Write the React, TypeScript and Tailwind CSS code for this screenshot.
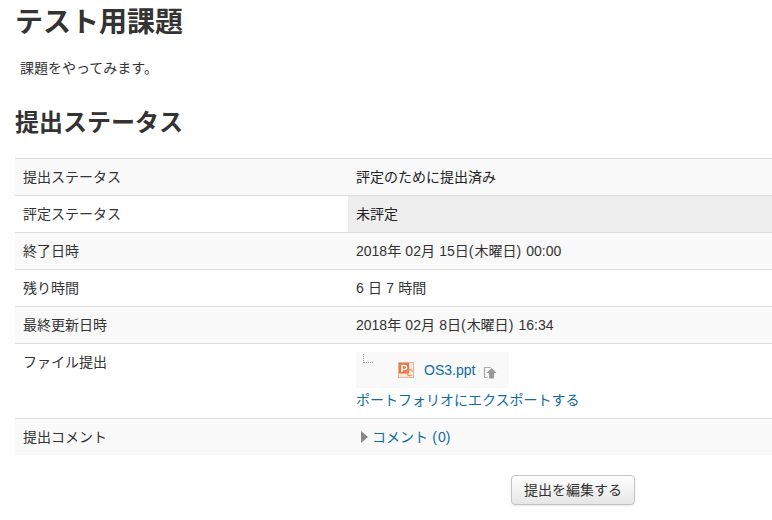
const font = { fontFamily: '"Liberation Sans", "Noto Sans CJK JP", sans-serif', wordSpacing: "0.33px" };

function Row({ label, bg, children, valueBg = "", h = "h-[37px]" }: { label: string; bg: string; children: React.ReactNode; valueBg?: string; h?: string }) {
  return (
    <div className={`flex ${h} border-t border-[#dddddd] ${bg}`}>
      <div className="w-[333px] shrink-0 pl-2 pt-[8px] leading-5">{label}</div>
      <div className={`flex-1 pl-2 pt-[8px] leading-5 ${valueBg}`}>{children}</div>
    </div>
  );
}

function Paren({ c }: { c: string }) {
  return <span className="tracking-[1px]">{c}</span>;
}

function PptIcon() {
  return (
    <svg width="16" height="16" viewBox="0 0 16 16" className="shrink-0">
      <rect x="0.5" y="0.5" width="15" height="15" fill="#fbe9dd" stroke="#eeb595" />
      <rect x="1" y="1" width="10" height="10.5" fill="#e8743f" />
      <path d="M4 10V3.5h2.6a2 2 0 0 1 0 4H4" fill="none" stroke="#fff" strokeWidth="1.4" />
      <path d="M14.5 9.5a3 3 0 1 0-1 3.5" fill="none" stroke="#e8905f" strokeWidth="1.2" />
    </svg>
  );
}

function PortfolioIcon() {
  return (
    <svg width="14" height="14" viewBox="0 0 14 14" className="shrink-0">
      <path d="M1.5 12.5V2.5h6M1.5 12.5h3" fill="none" stroke="#aaa" strokeWidth="1.2" />
      <path d="M8.5 3 13.5 8H11V13.5H6V8H3.5Z" fill="#999" />
    </svg>
  );
}

export default function App() {
  return (
    <div className="w-[772px] h-[520px] overflow-hidden bg-white text-[14px] text-[#333333]" style={font}>
      <div className="pl-[15px]">
        <h2 className="h-[40px] text-[28px] font-bold leading-[46px] text-[#333333]">テスト用課題</h2>
        <p className="pl-[5px] pt-[18px] leading-5">課題をやってみます。</p>
        <h3 className="mt-[25px] h-[40px] text-[24px] font-bold leading-[40px]">提出ステータス</h3>
        <div className="mt-[15px]">
          <Row label="提出ステータス" bg="bg-[#f9f9f9]"><span className="text-[#222]">評定のために提出済み</span></Row>
          <Row label="評定ステータス" bg="bg-white" valueBg="bg-[#eeeeee]"><span className="text-[#222]">未評定</span></Row>
          <Row label="終了日時" bg="bg-[#f9f9f9]">2018年 02月 15日<Paren c="(" />木曜日<Paren c=")" /> 00:00</Row>
          <Row label="残り時間" bg="bg-white">6 日 7 時間</Row>
          <Row label="最終更新日時" bg="bg-[#f9f9f9]">2018年 02月 8日<Paren c="(" />木曜日<Paren c=")" /> 16:34</Row>
          <Row label="ファイル提出" bg="bg-white" h="h-[75px]">
            <div className="flex h-[36px] w-[153px] items-center bg-[#f9f9f9] pl-[42px] relative">
              <span className="absolute left-[7px] top-[2px] h-[9px] w-[10px] border-b border-l border-dotted border-[#999]" />
              <PptIcon />
              <a className="ml-[10px] text-[#0f6c9f]">OS3.ppt</a>
              <span className="ml-[8px] mt-[3px]"><PortfolioIcon /></span>
            </div>
            <a className="block pt-[1px] leading-[22px] text-[#0f6c9f]">ポートフォリオにエクスポートする</a>
          </Row>
          <Row label="提出コメント" bg="bg-[#f9f9f9]">
            <div className="flex items-center pl-[5px]">
              <span className="h-0 w-0 border-y-[6px] border-l-[7px] border-y-transparent border-l-[#888888]" />
              <a className="ml-[4px] text-[#0f6c9f]">コメント <Paren c="(" />0<Paren c=")" /></a>
            </div>
          </Row>
        </div>
        <div className="flex justify-center pl-[359px] pt-[20px]">
          <button className="h-[30px] w-[124px] rounded border border-[#c4c4c4] bg-gradient-to-b from-white to-[#e6e6e6] text-[14px] text-[#333] shadow-[0_1px_2px_rgba(0,0,0,0.1)]">提出を編集する</button>
        </div>
      </div>
    </div>
  );
}
